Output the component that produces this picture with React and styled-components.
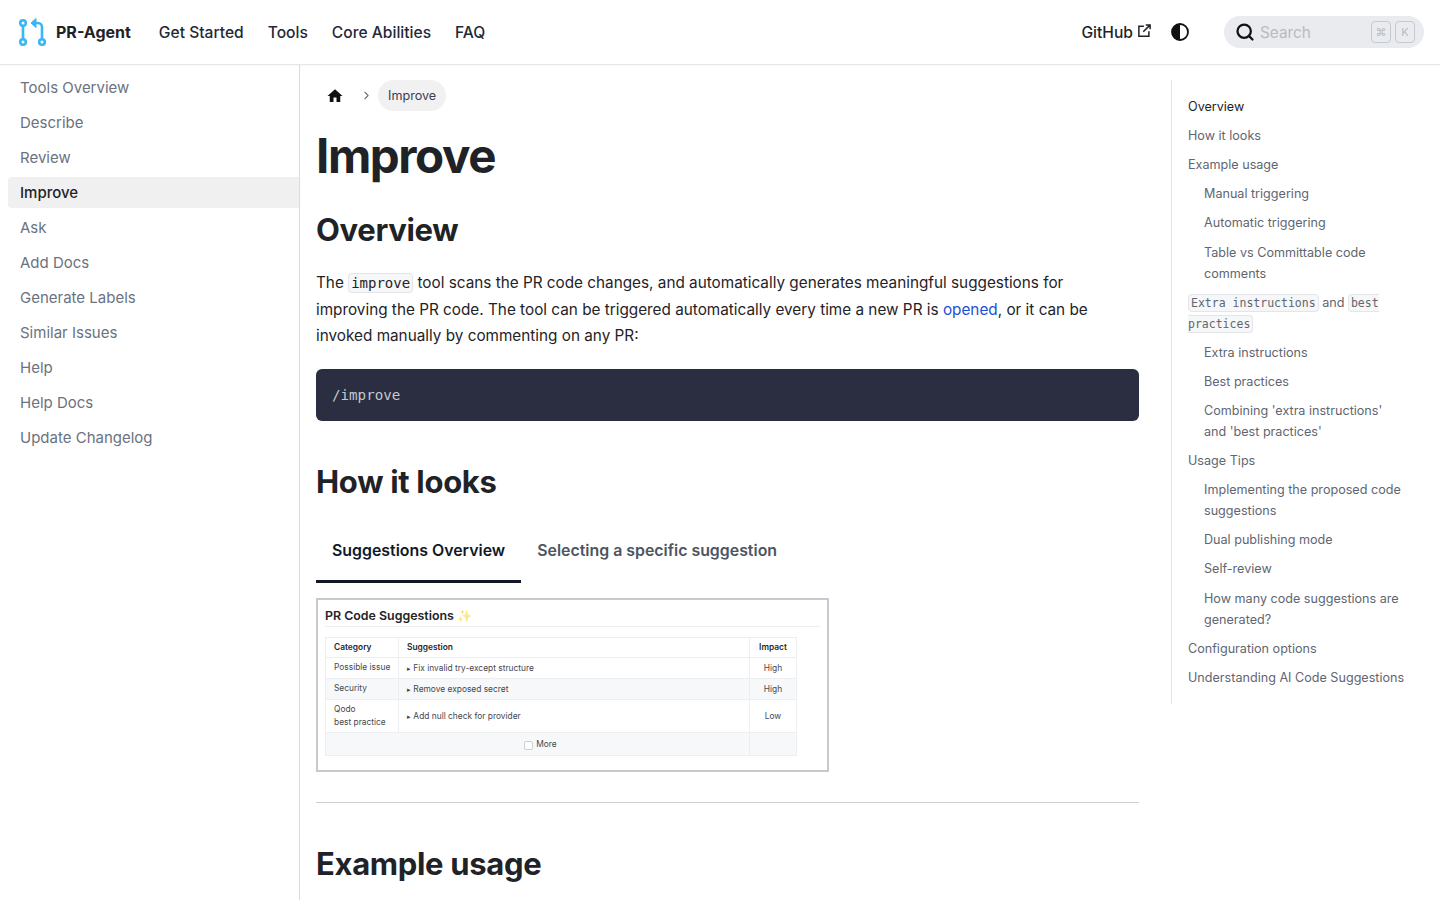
import React from "react";
import styled, { createGlobalStyle } from "styled-components";
import { ChevronRight, Search } from "lucide-react";

const sideItems = [
  "Tools Overview",
  "Describe",
  "Review",
  "Improve",
  "Ask",
  "Add Docs",
  "Generate Labels",
  "Similar Issues",
  "Help",
  "Help Docs",
  "Update Changelog",
];

const tocItems = [
  { text: "Overview", active: true },
  { text: "How it looks" },
  { text: "Example usage" },
  { text: "Manual triggering", sub: true },
  { text: "Automatic triggering", sub: true },
  { text: "Table vs Committable code comments", sub: true },
  { code: true },
  { text: "Extra instructions", sub: true },
  { text: "Best practices", sub: true },
  { text: "Combining 'extra instructions' and 'best practices'", sub: true },
  { text: "Usage Tips" },
  { text: "Implementing the proposed code suggestions", sub: true },
  { text: "Dual publishing mode", sub: true },
  { text: "Self-review", sub: true },
  { text: "How many code suggestions are generated?", sub: true },
  { text: "Configuration options" },
  { text: "Understanding AI Code Suggestions" },
];

const rows = [
  { cat: ["Possible issue"], text: "Fix invalid try-except structure", impact: "High" },
  { cat: ["Security"], text: "Remove exposed secret", impact: "High", shaded: true },
  { cat: ["Qodo", "best practice"], text: "Add null check for provider", impact: "Low", tall: true },
];

function Logo() {
  return (
    <svg width="28" height="30" viewBox="0 0 28 30" fill="none" stroke="#38b6f5" strokeWidth="2.6">
      <circle cx="5" cy="6" r="2.8" />
      <circle cx="5" cy="25" r="2.8" />
      <circle cx="24" cy="25" r="2.8" />
      <path d="M5 9v13" />
      <path d="M24 22V10a4 4 0 0 0-4-4h-3" />
      <path d="M18 1.5 L13 6 L18 10.5 Z" fill="#38b6f5" strokeWidth="1" />
    </svg>
  );
}

export default function App() {
  return (
    <>
      <GlobalStyle />
      <Header>
        <Brand>
          <Logo />
          <BrandName>PR-Agent</BrandName>
        </Brand>
        <TopNav>
          <TopLink>Get Started</TopLink>
          <TopLink>Tools</TopLink>
          <TopLink>Core Abilities</TopLink>
          <TopLink>FAQ</TopLink>
        </TopNav>
        <HeaderRight>
          <GitHubLink>
            GitHub
            <svg width="15" height="15" viewBox="0 0 24 24" fill="none" stroke="#1f2328" strokeWidth="2.4">
              <path d="M11 5H3v16h16v-8" />
              <path d="M10 14 21 3M14 3h7v7" />
            </svg>
          </GitHubLink>
          <ThemeToggle>
            <svg width="18" height="18" viewBox="0 0 18 18">
              <circle cx="9" cy="9" r="8" fill="none" stroke="#111" strokeWidth="1.8" />
              <path d="M9 1a8 8 0 0 0 0 16z" fill="#111" />
            </svg>
          </ThemeToggle>
          <SearchBox>
            <Search size={20} strokeWidth={2.7} color="#111" />
            <SearchText>Search</SearchText>
            <Keys>
              <Key>⌘</Key>
              <Key>K</Key>
            </Keys>
          </SearchBox>
        </HeaderRight>
      </Header>
      <Body>
        <Sidebar>
          {sideItems.map((item) => (
            <SideItem key={item} $active={item === "Improve"}>
              {item}
            </SideItem>
          ))}
        </Sidebar>
        <Main>
          <Crumbs>
            <HomeCrumb>
              <svg width="18" height="18" viewBox="0 0 24 24" fill="#111">
                <path d="M10 20v-6h4v6h5v-8h3L12 3 2 12h3v8z" />
              </svg>
            </HomeCrumb>
            <ChevronRight size={13} color="#6b7280" />
            <CrumbPill>Improve</CrumbPill>
          </Crumbs>
          <Title>Improve</Title>
          <SectionOverview>Overview</SectionOverview>
          <Para>
            The <InlineCode>improve</InlineCode> tool scans the PR code changes, and automatically generates meaningful
            suggestions for improving the PR code. The tool can be triggered automatically every time a new PR is{" "}
            <ParaLink>opened</ParaLink>, or it can be invoked manually by commenting on any PR:
          </Para>
          <CodeBlock>/improve</CodeBlock>
          <SectionLooks>How it looks</SectionLooks>
          <Tabs>
            <Tab $active>Suggestions Overview</Tab>
            <Tab>Selecting a specific suggestion</Tab>
          </Tabs>
          <Shot>
            <ShotTitle>
              PR Code Suggestions <Sparkle>✨</Sparkle>
            </ShotTitle>
            <ShotTable>
              <thead>
                <tr>
                  <CatHead>Category</CatHead>
                  <ShotHead>Suggestion</ShotHead>
                  <ImpactHead>Impact</ImpactHead>
                </tr>
              </thead>
              <tbody>
                {rows.map((r) => (
                  <ShotRow key={r.text} $shaded={r.shaded} $tall={r.tall}>
                    <CatCell>
                      {r.cat.map((c) => (
                        <div key={c}>{c}</div>
                      ))}
                    </CatCell>
                    <ShotCell>
                      <Caret>▸</Caret> {r.text}
                    </ShotCell>
                    <ShotCell $center>{r.impact}</ShotCell>
                  </ShotRow>
                ))}
                <ShotRow $shaded $more>
                  <MoreCell colSpan={2} $center>
                    <MoreBox />
                    More
                  </MoreCell>
                  <ShotCell />
                </ShotRow>
              </tbody>
            </ShotTable>
          </Shot>
          <Rule />
          <SectionExample>Example usage</SectionExample>
        </Main>
        <TocWrap>
          <Toc>
            {tocItems.map((t, i) =>
              t.code ? (
                <TocItem key={i}>
                  <TocCode>Extra instructions</TocCode> and <TocCode>best practices</TocCode>
                </TocItem>
              ) : (
                <TocItem key={i} $sub={t.sub} $active={t.active}>
                  {t.text}
                </TocItem>
              )
            )}
          </Toc>
        </TocWrap>
      </Body>
    </>
  );
}

/* ================== STYLES ================== */

const GlobalStyle = createGlobalStyle`
  html, body {
    margin: 0;
    padding: 0;
    background: #fff;
    height: 900px;
    overflow: hidden;
  }
  body {
    font-family: Inter, "Liberation Sans", sans-serif;
    color: #1f2328;
  }
  * {
    box-sizing: border-box;
  }
`;

const Header = styled.header`
  height: 65px;
  display: flex;
  align-items: center;
  padding: 0 16px 0 18px;
  border-bottom: 1px solid #e5e7eb;
  box-shadow: 0 1px 2px rgba(0, 0, 0, 0.04);
`;

const Brand = styled.div`
  display: flex;
  align-items: center;
  gap: 10px;
`;

const BrandName = styled.span`
  font-size: 16px;
  font-weight: 700;
  color: #1f2328;
`;

const TopNav = styled.nav`
  display: flex;
  gap: 24px;
  margin-left: 28px;
`;

const TopLink = styled.a`
  font-size: 15.6px;
  font-weight: 500;
  color: #1f2937;
`;

const HeaderRight = styled.div`
  margin-left: auto;
  display: flex;
  align-items: center;
`;

const GitHubLink = styled.a`
  display: flex;
  align-items: center;
  gap: 4px;
  font-size: 15.6px;
  font-weight: 500;

  svg {
    margin-top: -4px;
  }
`;

const ThemeToggle = styled.span`
  display: flex;
  margin-left: 19px;
`;

const SearchBox = styled.div`
  width: 200px;
  height: 32px;
  margin-left: 35px;
  border-radius: 16px;
  background: #e9ebef;
  display: flex;
  align-items: center;
  padding: 0 9px 0 11px;
`;

const SearchText = styled.span`
  font-size: 15.3px;
  color: #b7bbc2;
  margin-left: 5px;
`;

const Keys = styled.span`
  margin-left: auto;
  display: flex;
  gap: 4px;
`;

const Key = styled.kbd`
  width: 20px;
  height: 22px;
  border: 1.5px solid #c6c9cf;
  border-radius: 4px;
  font-family: Inter, sans-serif;
  font-size: 11px;
  color: #b7bbc2;
  display: flex;
  align-items: center;
  justify-content: center;
`;

const Body = styled.div`
  display: flex;
  height: 835px;
`;

const Sidebar = styled.aside`
  width: 300px;
  flex: none;
  padding: 7px 0 0 8px;
  border-right: 1px solid #d9dbdf;
  display: flex;
  flex-direction: column;
  gap: 4px;
`;

const SideItem = styled.div`
  height: 31px;
  line-height: 31px;
  padding-left: 12px;
  font-size: 15px;
  font-weight: ${(p) => (p.$active ? 500 : 400)};
  color: ${(p) => (p.$active ? "#1f2328" : "#6b7280")};
  background: ${(p) => (p.$active ? "#f0f0f1" : "transparent")};
  border-radius: 4px 0 0 4px;
`;

const Main = styled.main`
  width: 855px;
  flex: none;
  padding: 15px 16px 0;
  overflow: hidden;
`;

const Crumbs = styled.div`
  display: flex;
  align-items: center;
  height: 31px;
`;

const HomeCrumb = styled.span`
  display: flex;
  margin-left: 10px;
  margin-right: 16px;
`;

const CrumbPill = styled.span`
  margin-left: 5px;
  height: 31px;
  line-height: 31px;
  padding: 0 10px;
  border-radius: 16px;
  background: #f1f1f2;
  font-size: 12.6px;
  color: #374151;
`;

const Title = styled.h1`
  margin: 13px 0 0;
  font-size: 47.5px;
  line-height: 64px;
  font-weight: 700;
  letter-spacing: -0.03em;
  color: #1f2328;
`;

const Section = styled.h2`
  font-size: 31px;
  line-height: 40px;
  font-weight: 700;
  letter-spacing: -0.01em;
  color: #1f2328;
`;

const SectionOverview = styled(Section)`
  margin: 22px 0 0;
`;

const SectionLooks = styled(Section)`
  margin: 41px 0 0;
`;

const SectionExample = styled(Section)`
  margin: 41px 0 0;
`;

const Para = styled.p`
  margin: 20px 0 0;
  font-size: 15.3px;
  line-height: 26.5px;
  color: #1f2328;
`;

const InlineCode = styled.code`
  font-family: "DejaVu Sans Mono", "Liberation Mono", monospace;
  font-size: 14px;
  line-height: 1;
  padding: 1px 2px;
  background: #f6f7f8;
  border: 1px solid #e3e5e8;
  border-radius: 4px;
`;

const ParaLink = styled.a`
  color: #1d4ed8;
`;

const CodeBlock = styled.pre`
  margin: 19px 0 0;
  height: 52px;
  line-height: 52px;
  padding: 0 16px;
  background: #2a2e40;
  border-radius: 6px;
  font-family: "DejaVu Sans Mono", "Liberation Mono", monospace;
  font-size: 14.2px;
  color: #c5c8d0;
`;

const Tabs = styled.div`
  display: flex;
  margin-top: 17px;
`;

const Tab = styled.div`
  height: 64px;
  line-height: 64px;
  padding: 0 16px;
  font-size: 15.9px;
  font-weight: 600;
  color: ${(p) => (p.$active ? "#111827" : "#4b5563")};
  border-bottom: 3px solid ${(p) => (p.$active ? "#111827" : "transparent")};
`;

const Shot = styled.div`
  width: 513px;
  height: 174px;
  margin-top: 15px;
  border: 2px solid #c8c9ce;
  padding: 0 7px;
`;

const ShotTitle = styled.div`
  height: 27px;
  line-height: 31px;
  font-size: 12.4px;
  font-weight: 600;
  border-bottom: 1px solid #eceef0;
`;

const Sparkle = styled.span`
  font-size: 12px;
  opacity: 0.55;
`;

const ShotTable = styled.table`
  width: 472px;
  margin: 10px 0 0;
  border-collapse: collapse;
  table-layout: fixed;
  font-size: 8.4px;
  color: #44484f;
  border: 1px solid #eceef0;
`;

const ShotHead = styled.th`
  height: 20px;
  padding: 0 8px;
  font-weight: 600;
  color: #24292f;
  text-align: ${(p) => (p.$center ? "center" : "left")};
  border: 1px solid #eceef0;
`;

const CatHead = styled(ShotHead)`
  width: 73px;
`;

const ImpactHead = styled(ShotHead).attrs({ $center: true })`
  width: 47px;
  padding: 0;
`;

const ShotRow = styled.tr`
  height: ${(p) => (p.$tall ? "33px" : p.$more ? "23px" : "21px")};
  background: ${(p) => (p.$shaded ? "#f6f8fa" : "#fff")};
`;

const ShotCell = styled.td`
  padding: 0 8px;
  text-align: ${(p) => (p.$center ? "center" : "left")};
  border: 1px solid #eceef0;
`;

const MoreCell = styled(ShotCell)`
  padding-left: 14px;
  padding-top: 2px;
`;

const CatCell = styled(ShotCell)`
  line-height: 12.5px;
  white-space: nowrap;
`;

const Caret = styled.span`
  font-size: 7px;
`;

const MoreBox = styled.span`
  display: inline-block;
  width: 9px;
  height: 9px;
  margin-right: 3px;
  vertical-align: middle;
  background: #fff;
  border: 1px solid #ccd0d5;
  border-radius: 2px;
`;

const Rule = styled.hr`
  margin: 30px 0 0;
  border: none;
  border-top: 1px solid #cfd1d5;
`;

const TocWrap = styled.div`
  flex: 1;
  padding: 15px 0 0 16px;
`;

const Toc = styled.nav`
  height: 624px;
  padding: 16px 34px 0 16px;
  border-left: 1px solid #e2e4e8;
  display: flex;
  flex-direction: column;
  gap: 8.11px;
`;

const TocItem = styled.div`
  font-size: 12.6px;
  line-height: 21px;
  padding-left: ${(p) => (p.$sub ? "16px" : "0")};
  color: ${(p) => (p.$active ? "#1f2328" : "#5f6672")};
`;

const TocCode = styled.code`
  font-family: "DejaVu Sans Mono", "Liberation Mono", monospace;
  font-size: 11.5px;
  line-height: 1;
  padding: 1px 2px;
  background: #f6f7f8;
  border: 1px solid #e3e5e8;
  border-radius: 4px;
`;
